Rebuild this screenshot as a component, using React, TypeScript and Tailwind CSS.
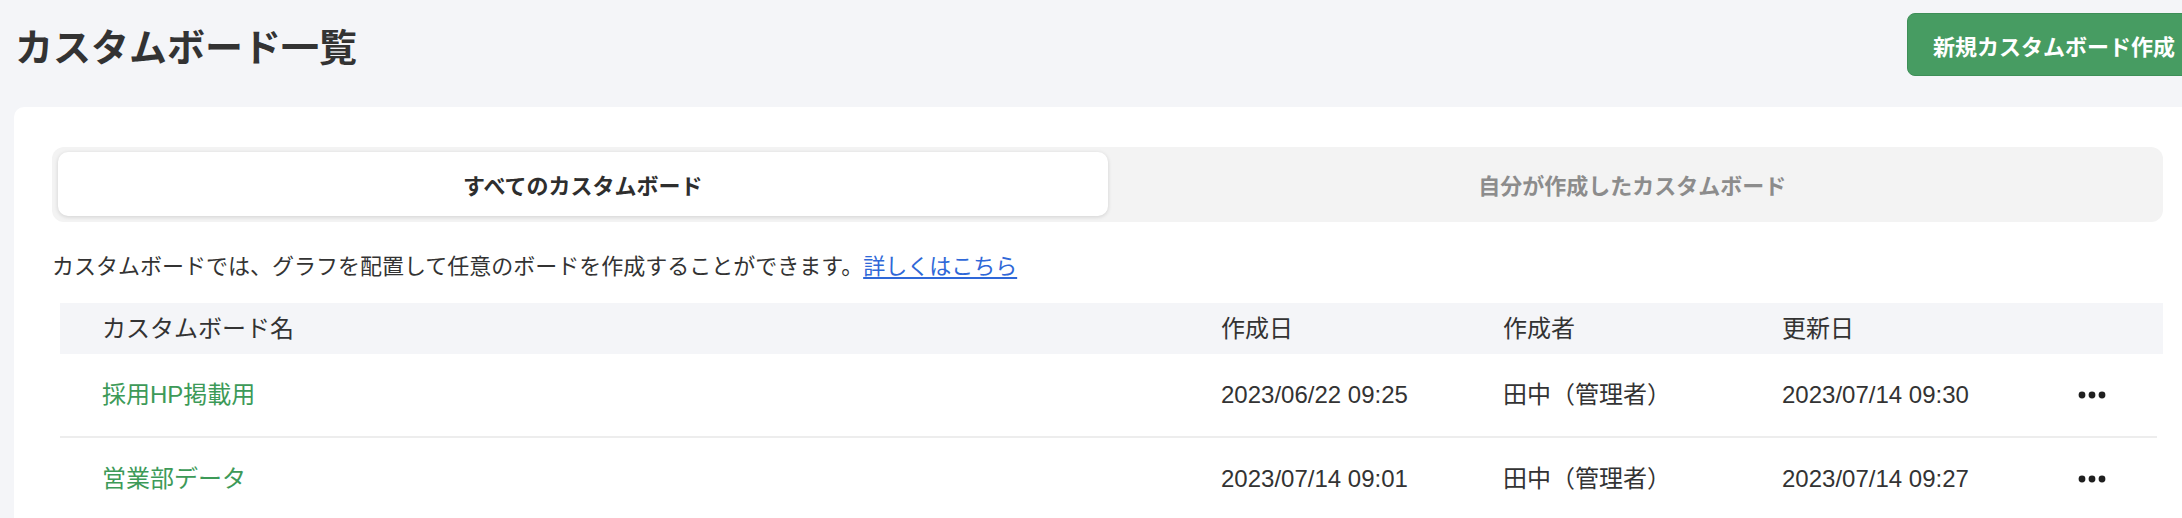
import React from "react";

const rows = [
  { name: "採用HP掲載用", created: "2023/06/22 09:25", author: "田中（管理者）", updated: "2023/07/14 09:30" },
  { name: "営業部データ", created: "2023/07/14 09:01", author: "田中（管理者）", updated: "2023/07/14 09:27" },
];

function Dots() {
  return (
    <svg width="28" height="8" viewBox="0 0 28 8" aria-hidden="true">
      <circle cx="4" cy="4" r="3.4" fill="#1f1f1f" />
      <circle cx="14" cy="4" r="3.4" fill="#1f1f1f" />
      <circle cx="24" cy="4" r="3.4" fill="#1f1f1f" />
    </svg>
  );
}

export default function App() {
  return (
    <div className="w-[2182px] h-[518px] overflow-hidden bg-[#f4f5f8] text-[#333333] font-['Liberation_Sans','Noto_Sans_CJK_JP',sans-serif]">
      <div className="ml-[14px] w-[2187px]">
        <header className="flex h-[89px] items-center justify-between">
          <h1 className="pl-[1px] text-[38px] font-bold leading-none text-[#333333] font-['Noto_Sans_CJK_JP',sans-serif]">
            カスタムボード一覧
          </h1>
          <button className="flex h-[63px] items-center rounded-[8px] border border-[#3e8f58] bg-[#479c62] px-[25px] text-[22px] font-bold leading-none text-white font-['Noto_Sans_CJK_JP',sans-serif]">
            新規カスタムボード作成
          </button>
        </header>

        <main className="mt-[18px] rounded-tl-[10px] rounded-tr-[10px] bg-white px-[38px] pt-[40px]">
          <div className="flex h-[75px] rounded-[12px] bg-[#f3f3f3] px-[6px] pb-[6px] pt-[5px] font-['Noto_Sans_CJK_JP',sans-serif]">
            <div className="flex flex-1 items-center justify-center rounded-[10px] bg-white text-[22px] font-bold text-[#2e2e2e] shadow-[0_1px_4px_rgba(0,0,0,0.14)]">
              すべてのカスタムボード
            </div>
            <div className="flex flex-1 items-center justify-center text-[22px] font-bold text-[#8c8c8c]">
              自分が作成したカスタムボード
            </div>
          </div>

          <p className="mt-[26px] text-[22px] leading-[32px] text-[#333333] font-['Noto_Sans_CJK_JP',sans-serif]">
            カスタムボードでは、グラフを配置して任意のボードを作成することができます。
            <a href="#" className="text-[#2f68d8] underline underline-offset-[3px]">
              詳しくはこちら
            </a>
          </p>

          <div className="ml-[8px] mt-[23px] text-[24px]">
            <div className="grid h-[51px] grid-cols-[1161px_282px_279px_296px_1fr] items-center bg-[#f4f5f8] text-[#333333]">
              <div className="pl-[42px]">カスタムボード名</div>
              <div>作成日</div>
              <div>作成者</div>
              <div>更新日</div>
              <div />
            </div>
            {rows.map((r) => (
              <div
                key={r.name}
                className="mr-[6px] grid h-[84px] grid-cols-[1161px_282px_279px_296px_1fr] items-center border-b-2 border-[#ededed]"
              >
                <div className="pl-[42px] text-[#3d9a58]">{r.name}</div>
                <div>{r.created}</div>
                <div>{r.author}</div>
                <div>{r.updated}</div>
                <div className="flex items-center">
                  <Dots />
                </div>
              </div>
            ))}
          </div>
        </main>
      </div>
    </div>
  );
}
